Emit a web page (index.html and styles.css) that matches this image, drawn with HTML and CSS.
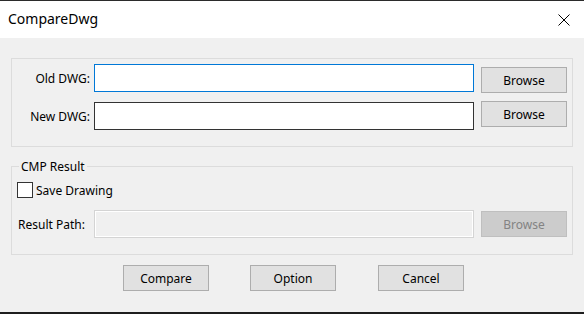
FILE: index.html
```html
<!DOCTYPE html>
<html lang="en">
<head>
<meta charset="utf-8">
<title>CompareDwg</title>
<link rel="stylesheet" href="styles.css">
</head>
<body>
<div class="window">
  <div class="titlebar">
    <span class="title">CompareDwg</span>
    <svg class="close" width="12" height="12" viewBox="0 0 12 12"><path d="M0.5 0.5L11.5 11.5M11.5 0.5L0.5 11.5" stroke="#000" stroke-width="1" fill="none"/></svg>
  </div>
  <div class="content">
    <div class="group files">
      <div class="row">
        <label class="lbl">Old DWG:</label>
        <input class="field focus" type="text">
        <button class="btn btn-top">Browse</button>
      </div>
      <div class="row row-next">
        <label class="lbl">New DWG:</label>
        <input class="field dark" type="text">
        <button class="btn btn-up">Browse</button>
      </div>
    </div>
    <fieldset class="group result">
      <legend class="legend">CMP Result</legend>
      <div class="check-row">
        <span class="checkbox"></span>
        <span class="check-label">Save Drawing</span>
      </div>
      <div class="row row-path">
        <label class="lbl lbl-left">Result Path:</label>
        <input class="field disabled" type="text" disabled>
        <button class="btn btn-dis" disabled>Browse</button>
      </div>
    </fieldset>
    <div class="actions">
      <button class="btn">Compare</button>
      <button class="btn">Option</button>
      <button class="btn btn-last">Cancel</button>
    </div>
  </div>
  <div class="taskbar"></div>
</div>
</body>
</html>
```
FILE: styles.css
```css
* { box-sizing: border-box; }
html, body { margin: 0; padding: 0; }
body {
  width: 584px;
  height: 314px;
  overflow: hidden;
  font-family: "Noto Sans", "Open Sans", sans-serif;
  font-size: 12px;
  color: #000;
  background: #f0f0f0;
}
.window {
  display: flex;
  flex-direction: column;
  height: 314px;
}
.titlebar {
  height: 38px;
  border-top: 1px solid #2b2b2b;
  background: #fff;
  display: flex;
  align-items: center;
  padding-left: 8px;
}
.title {
  font-size: 14px;
  line-height: 20px;
  margin-top: -1px;
}
.close {
  margin-left: auto;
  margin-right: 14px;
  display: block;
}
.content {
  flex: 1;
  display: flex;
  flex-direction: column;
  background: #f0f0f0;
}
.group {
  border: 1px solid #dcdcdc;
  margin: 0 11px;
}
.files {
  margin-top: 20px;
  padding: 5px 0 16px 0;
}
.row {
  display: flex;
  align-items: center;
  height: 28px;
}
.row-next { margin-top: 10px; }
.lbl {
  width: 78px;
  margin-right: 4px;
  text-align: right;
  line-height: 16px;
  padding-top: 2px;
}
.lbl-left {
  text-align: left;
  padding-left: 6px;
}
.field {
  width: 380px;
  height: 28px;
  margin: 0 7px 0 0;
  padding: 0 4px;
  border: 1px solid #7a7a7a;
  background: #fff;
  font: inherit;
  outline: none;
}
.field.focus { border-color: #0078d7; }
.field.dark { border-color: #333333; }
.field.disabled {
  border-color: #d4d4d4;
  background: #f0f0f0;
  box-shadow: inset 0 0 0 1px #ffffff;
}
.btn {
  width: 86px;
  height: 26px;
  padding: 2px 0 0 0;
  border: 1px solid #adadad;
  background: #e1e1e1;
  font: inherit;
  color: #000;
  line-height: 16px;
}
.btn-top { align-self: flex-start; margin-top: 3px; }
.btn-up { align-self: flex-start; margin-top: -1px; }
.btn-dis {
  align-self: flex-start;
  margin-top: 1px;
  background: #cccccc;
  border-color: #bfbfbf;
  color: #838383;
}
.result {
  margin-top: 11px;
  padding: 0 0 16px 0;
  min-inline-size: 0;
}
.legend {
  margin-left: 7px;
  padding: 0 2px;
  line-height: 17px;
}
.check-row {
  display: flex;
  align-items: flex-start;
  height: 16px;
  margin-top: 7px;
  padding-left: 5px;
}
.checkbox {
  width: 16px;
  height: 16px;
  border: 1px solid #333333;
  background: #fff;
}
.check-label {
  margin-left: 3px;
  margin-top: 1px;
  line-height: 16px;
}
.row-path { margin-top: 12px; }
.actions {
  display: flex;
  gap: 41px;
  margin-top: 10px;
  padding-left: 123px;
}
.btn-last { margin-left: 1px; }
.taskbar {
  height: 2px;
  background: #1e1e1e;
}
```
